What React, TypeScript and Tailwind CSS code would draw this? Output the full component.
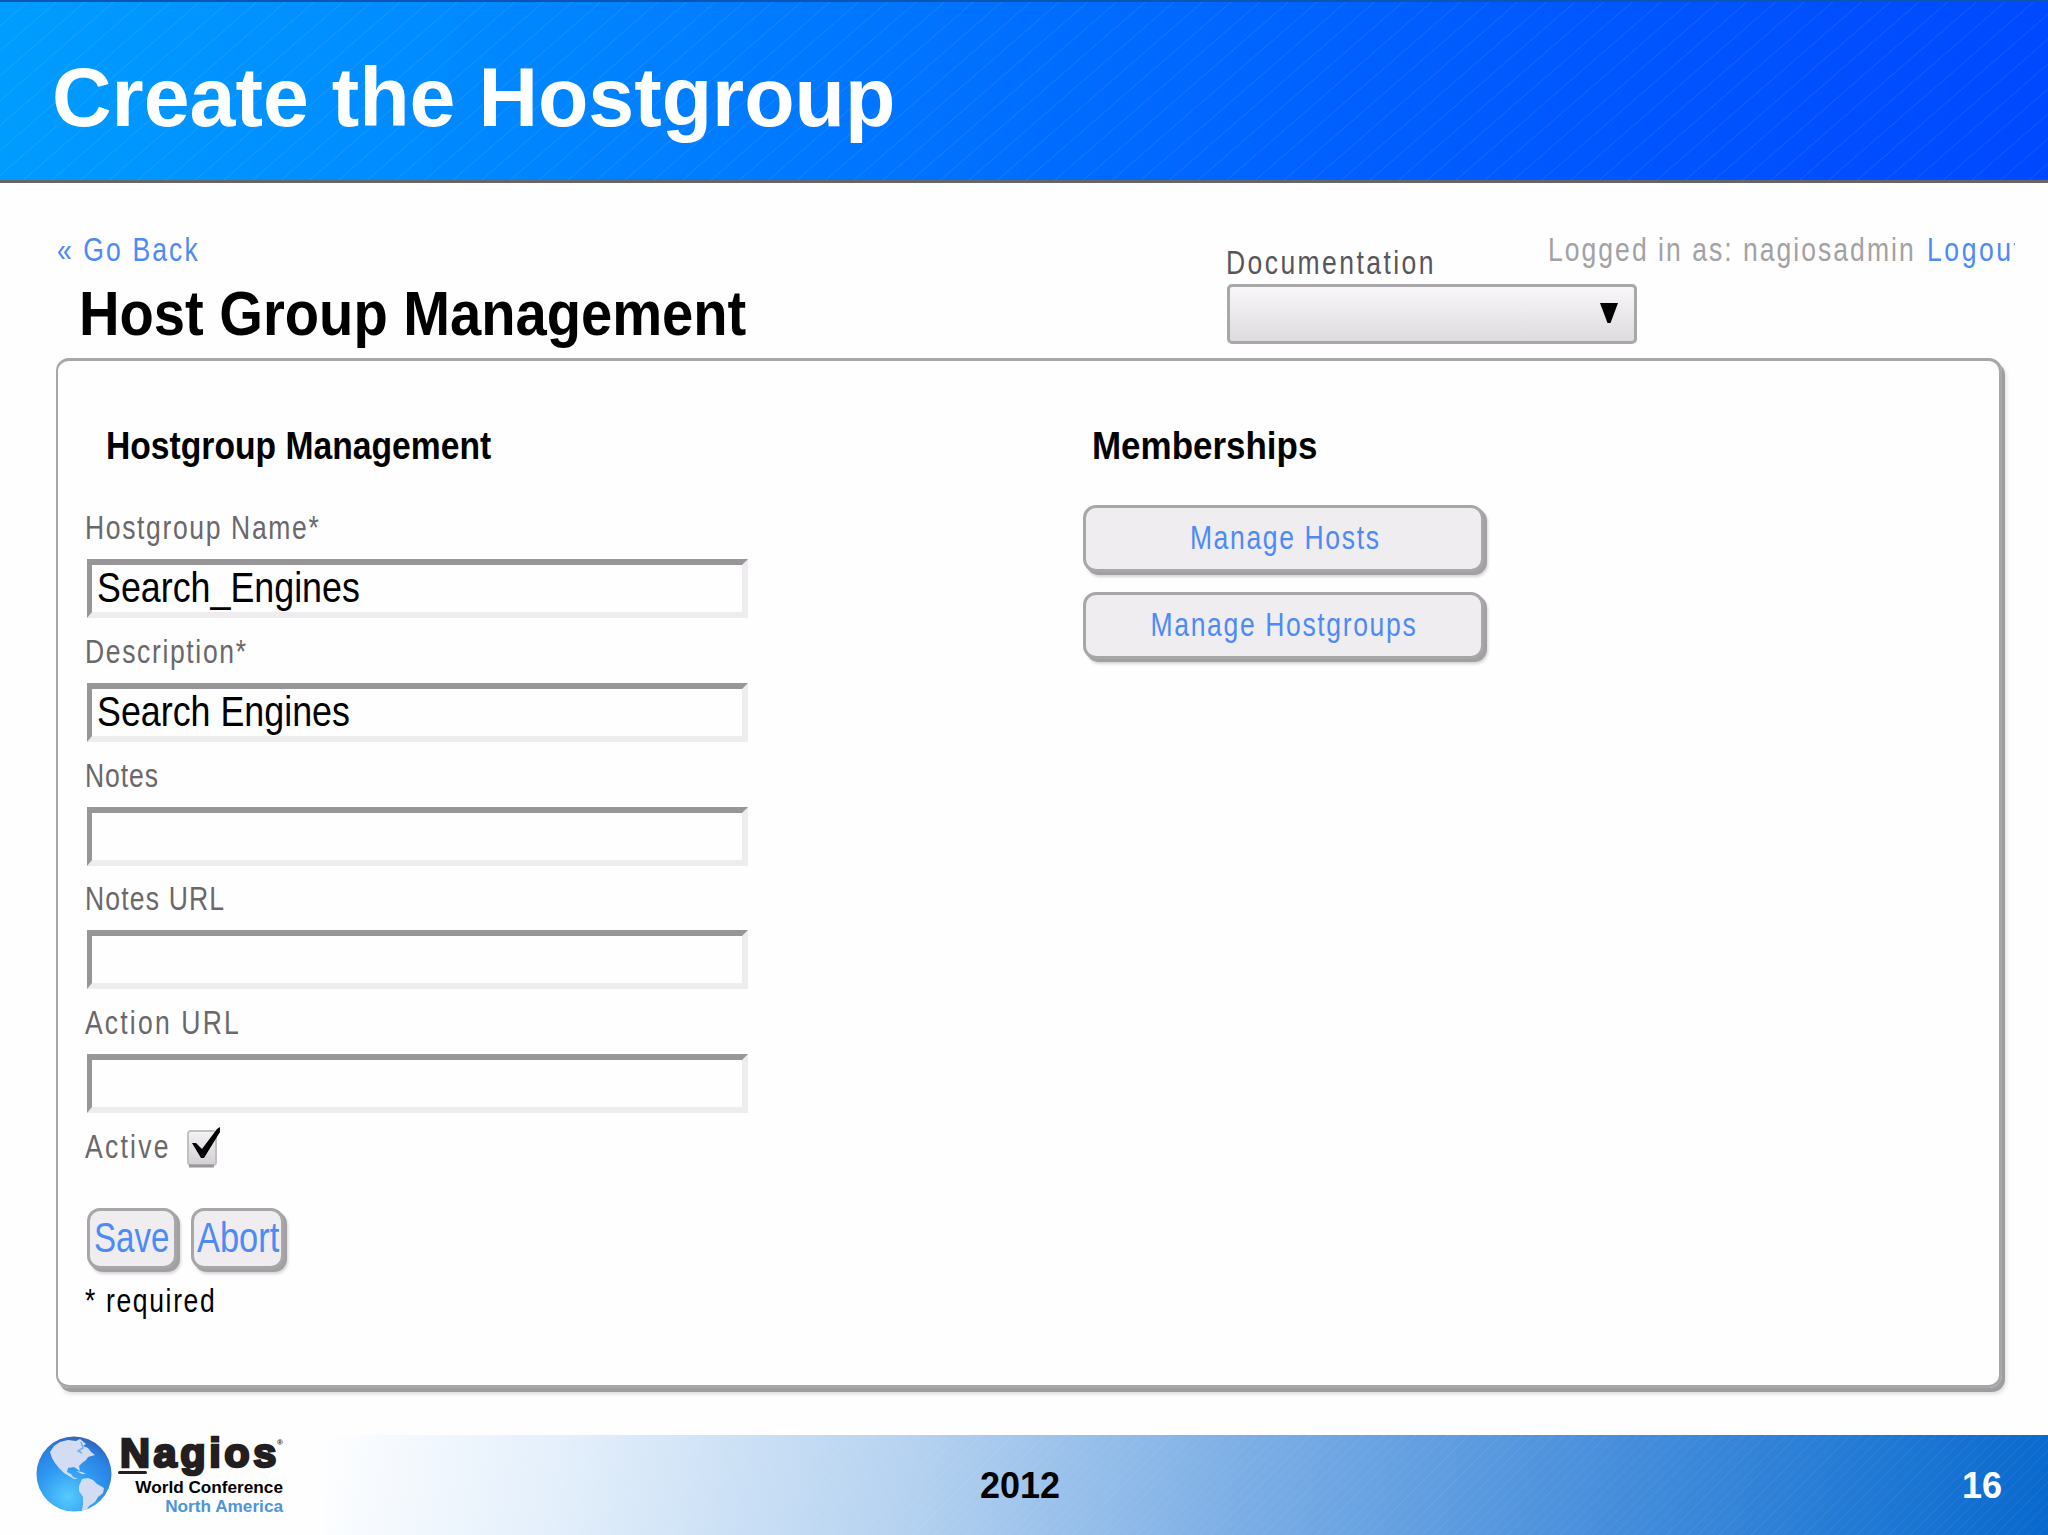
import React from 'react';
import clsx from 'clsx';

interface TextProps {
  children: React.ReactNode;
  className?: string;
}

// small condensed form text
const SmallText: React.FC<TextProps> = ({ children, className }) => (
  <span className={clsx('inline-block whitespace-pre scale-x-[0.78] text-[34px] leading-[40px]', className)}>
    {children}
  </span>
);

interface FieldProps {
  label: string;
  value?: string;
  tracking?: string;
}

const Field: React.FC<FieldProps> = ({ label, value, tracking = 'tracking-[2.1px]' }) => (
  <div className="h-[123.75px]">
    <label className="block h-[52px] text-[#6a686b]">
      <SmallText className={clsx('origin-left', tracking)}>{label}</SmallText>
    </label>
    <div className="flex items-center w-[661px] h-[59px] ml-[2px] border-t-[6px] border-l-[5px] border-b-[6px] border-r-[6px] border-t-[#989599] border-l-[#989599] border-b-[#efecef] border-r-[#efecef] bg-[#fefefe]">
      <span className="block pl-[6px] pb-[3px] whitespace-pre origin-left scale-x-[0.833] text-[43px] leading-[46px] text-black">{value}</span>
    </div>
  </div>
);

const buttonBase =
  'flex items-center rounded-[13px] border-[3px] border-[#a9a6a9] bg-[#efedef] text-[#4d8af5] shadow-[3px_3px_0_0_#a3a0a3,4px_5px_3px_0_#d5d3d5]';

const Globe = () => (
  <svg viewBox="0 0 76 76" className="w-[76px] h-[76px] mt-px ml-px shrink-0">
    <defs>
      <radialGradient id="sea" cx="0.42" cy="0.8" r="0.85">
        <stop offset="0" stopColor="#55cbfd" />
        <stop offset="0.45" stopColor="#319bf3" />
        <stop offset="0.8" stopColor="#2a7ee0" />
        <stop offset="1" stopColor="#3a5ba8" />
      </radialGradient>
      <clipPath id="disc">
        <circle cx="38" cy="38" r="37.5" />
      </clipPath>
    </defs>
    <circle cx="38" cy="38" r="37.5" fill="url(#sea)" />
    <g clipPath="url(#disc)" fill="#d3dcf2">
      <path d="M14 16 L18 10 L24 6 L32 4 L40 5 L44 3 L50 8 L47 10 L52 12 L55 16 L59 19 L52 21 L50 24 L46 27 L43 30 L44 35 L41 33 L38 31 L32 32 L31 36 L35 38 L37 41 L42 43 L38 43 L33 40 L28 37 L23 32 L19 27 L16 22 Z" />
      <path d="M46 43 L52 42 L57 44 L61 48 L68 52 L67 57 L62 61 L59 66 L53 70 L49 76 L45 78 L47 69 L47 61 L43 55 L43 50 Z" />
      <path d="M40 35 L46 36 L50 38 L46 38 Z" />
    </g>
    <path d="M45 6 L47 12 L42 15 L46 17" fill="none" stroke="#6fb0ee" strokeWidth="1.5" />
  </svg>
);

const Header = () => (
  <header className="flex h-[183px] border-t-2 border-t-[#0b55b5] border-b-[3px] border-b-[#666666] bg-[repeating-linear-gradient(139deg,transparent_0px,transparent_17.4px,#ffffff1c_18px,transparent_18.8px),linear-gradient(100deg,#009dff_0%,#008cff_20%,#006eff_50%,#0058ff_75%,#0048ff_100%)]">
    <h1 className="pl-[52px] pt-[47px] text-[82.5px] leading-[96px] font-bold text-white">Create the Hostgroup</h1>
  </header>
);

const Footer = () => (
  <footer className="flex h-[100px]">
    <div className="flex w-[325px] pl-[35px]">
      <Globe />
      <div className="relative w-[171px] font-bold text-[17.2px] leading-[19.5px] text-right">
        <div className="h-[42px] pl-[8px] -mt-[3px] text-left whitespace-nowrap text-[41.5px] leading-[42px] tracking-[3.6px] text-[#231f20] [-webkit-text-stroke:2.6px_#231f20]">Nagios</div>
        <div className="absolute left-[6px] top-[36px] w-[29px] h-[3px] rounded-full bg-[#231f20]" />
        <div className="absolute right-0 top-[4px] text-[8px] leading-[8px] text-[#231f20]">®</div>
        <div className="mt-[4px] text-black">World Conference</div>
        <div className="-mt-px text-[#4d94d8]">North America</div>
      </div>
    </div>
    <div className="flex flex-1 justify-between items-center pt-[2px] pl-[655px] pr-[46px] text-[36px] font-bold bg-[repeating-linear-gradient(135deg,transparent_0px,transparent_6px,#ffffff12_6.5px,transparent_7.5px),linear-gradient(100deg,#fdfeff_0%,#e3effb_14%,#b5d2f0_34%,#7fb0e6_52%,#4a90dc_73%,#1f78d4_90%,#0868cd_100%)]">
      <span className="text-black">2012</span>
      <span className="text-white">16</span>
    </div>
  </footer>
);

const TopBar = () => (
  <div className="flex h-[175px] pl-[57px]">
    <div className="w-[1169px] pt-[46px]">
      <a className="block text-[#4d8af5]">
        <SmallText className="origin-left tracking-[2.7px]">« Go Back</SmallText>
      </a>
      <h2 className="ml-[22px] mt-[9px] w-[800px] whitespace-nowrap text-[62.5px] leading-[70px] font-bold text-black origin-left scale-x-[0.898]">
        Host Group Management
      </h2>
    </div>
    <div className="w-[322px] pt-[59px]">
      <label className="block h-[42px] text-[#58565a]">
        <SmallText className="origin-left tracking-[3.1px]">Documentation</SmallText>
      </label>
      <div className="flex items-center justify-end w-[410px] h-[60px] ml-px pr-[16px] rounded-[5px] border-[3px] border-[#a9a7a9] bg-linear-to-b from-[#f8f6f8] to-[#dddbde]">
        <svg viewBox="0 0 18 20" className="w-[18px] h-[20px] -mt-[2px]">
          <path d="M0 0 H18 L10.5 20 H7.5 Z" fill="#000" />
        </svg>
      </div>
    </div>
    <div className="flex w-[467px] pt-[46px] overflow-hidden">
      <div className="w-[379px] shrink-0 text-[#a3a1a4]">
        <SmallText className="origin-left tracking-[2.6px]">Logged in as: nagiosadmin</SmallText>
      </div>
      {/* the link runs past the edge of the page area */}
      <div className="w-[88px] h-[50px] overflow-hidden text-[#4d8af5]">
        <SmallText className="origin-left tracking-[3.3px]">Logout</SmallText>
      </div>
    </div>
  </div>
);

export default function App() {
  return (
    <div className="w-[2048px] h-[1535px] overflow-hidden bg-[#fefefe] font-['Liberation_Sans',Arial,sans-serif]">
      <Header />
      <TopBar />
      <main className="flex w-[1946px] h-[1030px] ml-[56px] mb-[47px] border-[3px] border-l-2 border-[#a8a6a9] rounded-[13px] shadow-[3px_4px_0_0_#9f9da0,4px_6px_4px_0_#dddbdd]">
        <section className="w-[1025px] pl-[27px] pt-[61px]">
          <h3 className="h-[88px] ml-[21px] w-[600px] whitespace-nowrap origin-left scale-x-[0.852] text-[39.5px] leading-[46px] font-bold text-black">Hostgroup Management</h3>
          <div className="-mt-[3px]">
            <Field label="Hostgroup Name*" value="Search_Engines" />
            <Field label="Description*" value="Search Engines" />
            <Field label="Notes" tracking="tracking-[1.2px]" />
            <Field label="Notes URL" tracking="tracking-[1.5px]" />
            <Field label="Action URL" tracking="tracking-[2.8px]" />
          </div>
          <div className="flex h-[82px] text-[#6a686b]">
            <SmallText className="origin-left w-[101px] tracking-[2.9px]">Active</SmallText>
            <svg viewBox="0 0 36 42" className="w-[36px] h-[42px] overflow-visible">
              <defs>
                <linearGradient id="box" x1="0" y1="0" x2="0" y2="1">
                  <stop offset="0" stopColor="#f4f2f4" />
                  <stop offset="1" stopColor="#d2d0d3" />
                </linearGradient>
              </defs>
              <rect x="2" y="5" width="28" height="34" rx="3" fill="url(#box)" stroke="#c2c0c3" strokeWidth="2" />
              <path d="M3 40 H28" stroke="#99979a" strokeWidth="3" />
              <path d="M6 17 L10 17 L16 23 L31 3 L34 1 L34 6 L18 32 L15 32 Z" fill="#000" />
            </svg>
          </div>
          <div className="flex gap-[14px] h-[72px] ml-[2px]">
            <button className={clsx(buttonBase, 'w-[90px] h-[61px] pl-[4px] pb-[3px]')}>
              <span className="origin-left scale-x-[0.77] text-[43px]">Save</span>
            </button>
            <button className={clsx(buttonBase, 'w-[93px] h-[61px] pl-[3px] pb-[3px]')}>
              <span className="origin-left scale-x-[0.8] text-[43px]">Abort</span>
            </button>
          </div>
          <SmallText className="origin-left text-black tracking-[2.1px]">* required</SmallText>
        </section>
        <section className="pt-[61px]">
          <h3 className="h-[83px] ml-[9px] whitespace-nowrap origin-left scale-x-[0.885] text-[39.5px] leading-[46px] font-bold text-black">Memberships</h3>
          <div className="flex flex-col gap-[20px]">
            <button className={clsx(buttonBase, 'justify-center w-[401px] h-[67px] pb-[4px] pl-[3px]')}>
              <SmallText className="origin-center tracking-[2.1px]">Manage Hosts</SmallText>
            </button>
            <button className={clsx(buttonBase, 'justify-center w-[401px] h-[67px] pb-[4px]')}>
              <SmallText className="origin-center tracking-[2.1px]">Manage Hostgroups</SmallText>
            </button>
          </div>
        </section>
      </main>
      <Footer />
    </div>
  );
}
